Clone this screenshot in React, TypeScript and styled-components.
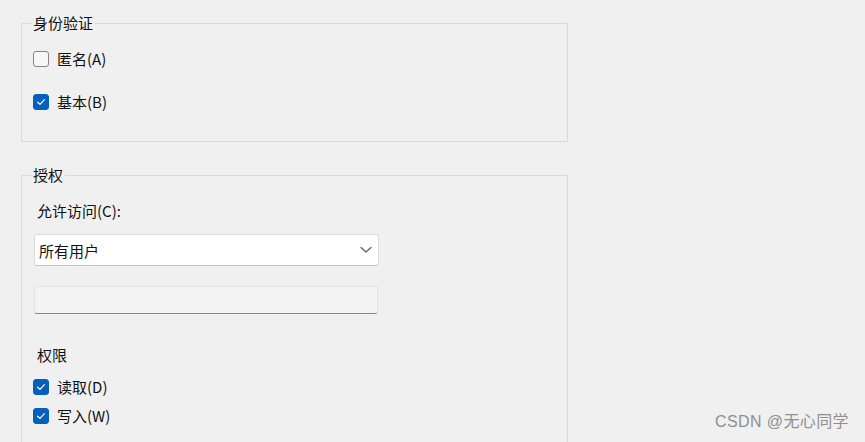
import React from "react";
import styled, { createGlobalStyle } from "styled-components";

const Global = createGlobalStyle`
  html, body {
    margin: 0;
    padding: 0;
    background: #f0f0f0;
  }
  body {
    font-family: "Noto Sans CJK SC", "Noto Sans", sans-serif;
    font-size: 15px;
    color: #111111;
  }
`;

const Page = styled.div`
  position: relative;
  width: 865px;
  height: 442px;
  overflow: hidden;
  box-sizing: border-box;
  padding: 13px 0 0 21px;
  background: #f0f0f0;
`;

const Group = styled.fieldset<{ $mt?: number; $pb?: number }>`
  width: 547px;
  box-sizing: border-box;
  margin: ${(p) => p.$mt ?? 0}px 0 0 0;
  padding: 0 11px ${(p) => p.$pb ?? 0}px 11px;
  border: 1px solid #dadada;
  border-radius: 1px;
  min-width: 0;
`;

const Legend = styled.legend`
  padding: 0 2px;
  margin-left: -2px;
  line-height: 20px;
  font-size: 15px;
  color: #111111;
`;

const Stack = styled.div<{ $pt: number }>`
  display: flex;
  flex-direction: column;
  align-items: flex-start;
  padding-top: ${(p) => p.$pt}px;
`;

const CheckRow = styled.label<{ $mt?: number }>`
  display: flex;
  align-items: center;
  gap: 8px;
  height: 20px;
  line-height: 20px;
  margin-top: ${(p) => p.$mt ?? 0}px;
  cursor: default;
`;

const Box = styled.span<{ $checked: boolean }>`
  width: 16px;
  height: 16px;
  box-sizing: border-box;
  border-radius: 3px;
  display: inline-flex;
  align-items: center;
  justify-content: center;
  background: ${(p) => (p.$checked ? "#0560bb" : "#f7f7f7")};
  border: 1px solid ${(p) => (p.$checked ? "#0560bb" : "#858585")};
`;

const Caption = styled.div<{ $mt: number; $ml?: number }>`
  height: 20px;
  line-height: 20px;
  margin-top: ${(p) => p.$mt}px;
  margin-left: ${(p) => p.$ml ?? 4}px;
`;

const Select = styled.div`
  width: 345px;
  height: 32px;
  box-sizing: border-box;
  margin-top: 13px;
  margin-left: 1px;
  background: #ffffff;
  border: 1px solid #dcdcdc;
  border-bottom-color: #c4c4c4;
  border-radius: 3px;
  display: flex;
  align-items: center;
  justify-content: space-between;
  padding: 0 6px 0 4px;
`;

const Field = styled.div`
  width: 344px;
  height: 28px;
  box-sizing: border-box;
  margin-top: 20px;
  margin-left: 1px;
  background: #f4f4f4;
  border: 1px solid #e2e2e2;
  border-bottom: 1px solid #878787;
  border-radius: 3px;
`;

const Watermark = styled.div`
  position: absolute;
  right: 16px;
  top: 411px;
  font-family: "Liberation Sans", "Noto Sans CJK SC", sans-serif;
  font-size: 16px;
  letter-spacing: 0.4px;
  line-height: 22px;
  color: #8f8f8f;
`;

const Check = ({ checked, label, mt }: { checked: boolean; label: string; mt?: number }) => (
  <CheckRow $mt={mt}>
    <Box $checked={checked}>
      {checked && (
        <svg width="10" height="10" viewBox="0 0 10 10">
          <path d="M1.6 5.2 L4 7.4 L8.4 2.6" fill="none" stroke="#ffffff" strokeWidth="1.2" strokeLinecap="round" strokeLinejoin="round" />
        </svg>
      )}
    </Box>
    <span>{label}</span>
  </CheckRow>
);

export default function App() {
  return (
    <>
      <Global />
      <Page>
        <Group $pb={29}>
          <Legend>身份验证</Legend>
          <Stack $pt={16}>
            <Check checked={false} label="匿名(A)" />
            <Check checked label="基本(B)" mt={23} />
          </Stack>
        </Group>
        <Group $mt={23} $pb={40}>
          <Legend>授权</Legend>
          <Stack $pt={16}>
            <Caption $mt={0}>允许访问(C):</Caption>
            <Select>
              <span>所有用户</span>
              <svg width="12" height="8" viewBox="0 0 12 8">
                <path d="M1 1.5 L6 6 L11 1.5" fill="none" stroke="#5c5c5c" strokeWidth="1.2" strokeLinecap="round" strokeLinejoin="round" />
              </svg>
            </Select>
            <Field />
            <Caption $mt={31}>权限</Caption>
            <Check checked label="读取(D)" mt={12} />
            <Check checked label="写入(W)" mt={9} />
          </Stack>
        </Group>
        <Watermark>CSDN @无心同学</Watermark>
      </Page>
    </>
  );
}
